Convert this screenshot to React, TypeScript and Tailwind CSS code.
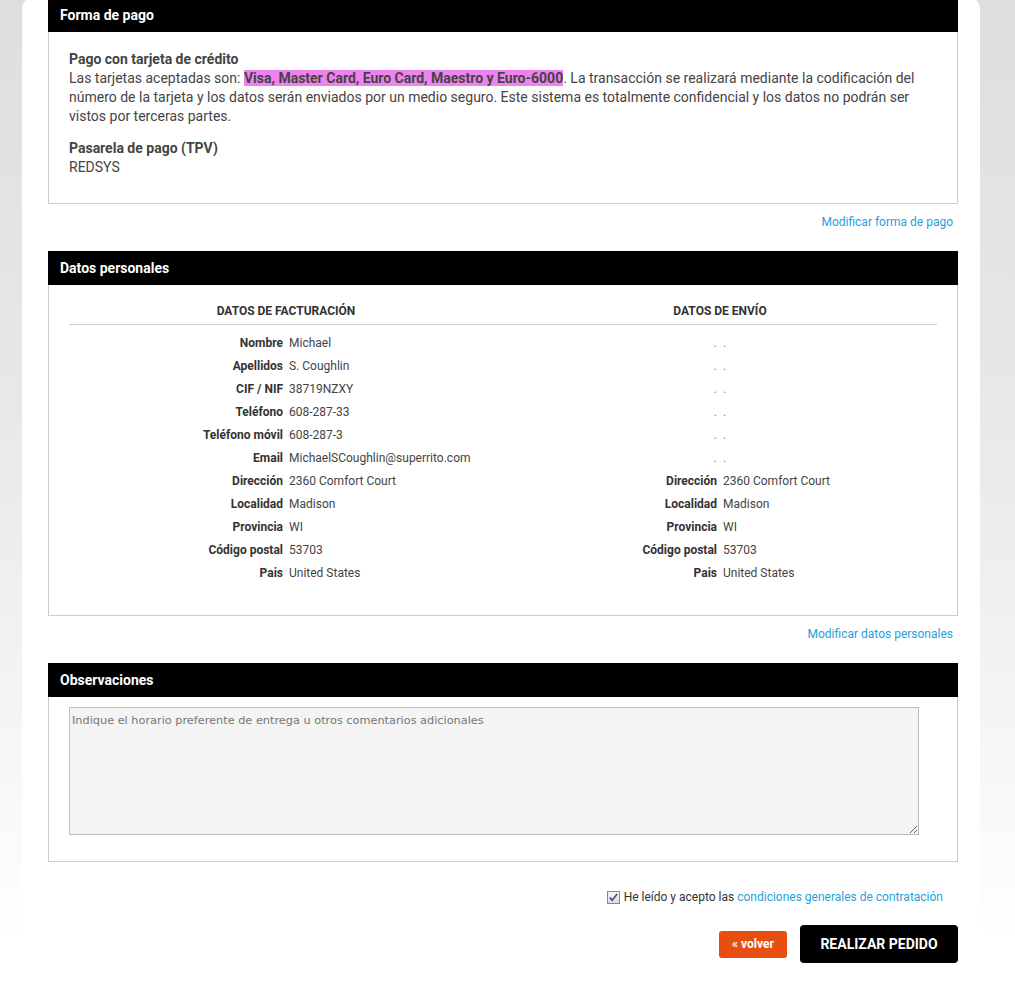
import React from "react";

const billing: [string, string][] = [
  ["Nombre", "Michael"],
  ["Apellidos", "S. Coughlin"],
  ["CIF / NIF", "38719NZXY"],
  ["Teléfono", "608-287-33"],
  ["Teléfono móvil", "608-287-3"],
  ["Email", "MichaelSCoughlin@superrito.com"],
  ["Dirección", "2360 Comfort Court"],
  ["Localidad", "Madison"],
  ["Provincia", "WI"],
  ["Código postal", "53703"],
  ["Pais", "United States"],
];

const shipping: [string, string][] = [
  [".", "."],
  [".", "."],
  [".", "."],
  [".", "."],
  [".", "."],
  [".", "."],
  ["Dirección", "2360 Comfort Court"],
  ["Localidad", "Madison"],
  ["Provincia", "WI"],
  ["Código postal", "53703"],
  ["Pais", "United States"],
];

function SectionHeader({ title }: { title: string }) {
  return (
    <div className="flex h-[34px] items-center bg-black px-[12px] text-[14px] font-bold text-white">
      {title}
    </div>
  );
}

function EditLink({ label }: { label: string }) {
  return (
    <div className="pt-[10px] pb-[20px] pr-[5px] text-right text-[12px] leading-[17px]">
      <a href="#" className="text-[#2a9fd8] hover:underline">{label}</a>
    </div>
  );
}

function DataColumn({ title, rows }: { title: string; rows: [string, string][] }) {
  return (
    <div>
      <div className="border-b border-[#cfcfcf] pb-[5px] text-center text-[12px] font-bold uppercase leading-[16px] text-[#333]">
        {title}
      </div>
      <div className="pt-[7px]">
        {rows.map(([label, value], i) => (
          <div key={i} className="flex text-[12px] leading-[23px]">
            <div className={`w-1/2 pr-[3px] text-right ${label === "." ? "font-normal text-[#888]" : "font-bold text-[#333]"}`}>{label}</div>
            <div className={`w-1/2 pl-[3px] ${value === "." ? "text-[#888]" : "text-[#444]"}`}>{value}</div>
          </div>
        ))}
      </div>
    </div>
  );
}

export default function App() {
  return (
    <div
      className="min-h-screen bg-[linear-gradient(180deg,#dedede_0%,#e8e8e8_40%,#f7f7f7_75%,#ffffff_92%)] pb-[40px]"
      style={{ fontFamily: "Roboto, 'Liberation Sans', sans-serif" }}
    >
      <div className="ml-[22px] mt-[-2px] w-[958px] rounded-[10px] bg-white pl-[26px] pr-[22px] pb-[20px]">
        {/* Forma de pago */}
        <SectionHeader title="Forma de pago" />
        <div className="border border-t-0 border-[#cccccc] px-[20px] pt-[18px] pb-[26px] text-[14px] leading-[19px] text-[#444]">
          <p>
            <strong className="font-bold">Pago con tarjeta de crédito</strong>
            <br />
            Las tarjetas aceptadas son:{" "}
            <span className="bg-[#ee82ee] font-bold">Visa, Master Card, Euro Card, Maestro y Euro-6000</span>. La transacción se
            realizará mediante la codificación del número de la tarjeta y los datos serán enviados por un medio seguro. Este
            sistema es totalmente confidencial y los datos no podrán ser vistos por terceras partes.
          </p>
          <p className="mt-[13px]">
            <strong className="font-bold">Pasarela de pago (TPV)</strong>
            <br />
            REDSYS
          </p>
        </div>
        <EditLink label="Modificar forma de pago" />

        {/* Datos personales */}
        <SectionHeader title="Datos personales" />
        <div className="border border-t-0 border-[#cccccc] px-[20px] pt-[18px] pb-[30px]">
          <div className="grid grid-cols-2">
            <DataColumn title="Datos de facturación" rows={billing} />
            <DataColumn title="Datos de envío" rows={shipping} />
          </div>
        </div>
        <EditLink label="Modificar datos personales" />

        {/* Observaciones */}
        <SectionHeader title="Observaciones" />
        <div className="border border-t-0 border-[#cccccc] px-[20px] pt-[10px] pb-[26px]">
          <textarea
            className="block h-[128px] w-[850px] border border-[#bbbbbb] bg-[#f4f4f4] px-[2px] py-[5px] text-[11.3px] text-[#444] outline-none placeholder:text-[#777]"
            style={{ fontFamily: "'DejaVu Sans', sans-serif" }}
            placeholder="Indique el horario preferente de entrega u otros comentarios adicionales"
          />
        </div>

        {/* Condiciones */}
        <div className="flex items-center justify-end pt-[26px] pr-[15px] text-[12px] text-[#333]">
          <span className="mr-[4px] flex h-[13px] w-[13px] items-center justify-center border border-[#8a8a8a] bg-[linear-gradient(180deg,#f4f4f4,#dcdcdc)]">
            <svg viewBox="0 0 12 12" className="h-[11px] w-[11px]">
              <path d="M2 6.2 L4.6 9 L10 2.2" fill="none" stroke="#3b4f9a" strokeWidth="1.8" />
            </svg>
          </span>
          <span>
            He leído y acepto las{" "}
            <a href="#" className="text-[#2a9fd8]">condiciones generales de contratación</a>
          </span>
        </div>

        {/* Botones */}
        <div className="mt-[19px] flex items-center justify-end gap-[13px]">
          <button className="h-[27px] w-[68px] rounded-[3px] bg-[#e84e0f] text-[12px] font-bold text-white">« volver</button>
          <button className="h-[38px] w-[158px] rounded-[4px] bg-black text-[14px] font-bold text-white">REALIZAR PEDIDO</button>
        </div>
      </div>
    </div>
  );
}
